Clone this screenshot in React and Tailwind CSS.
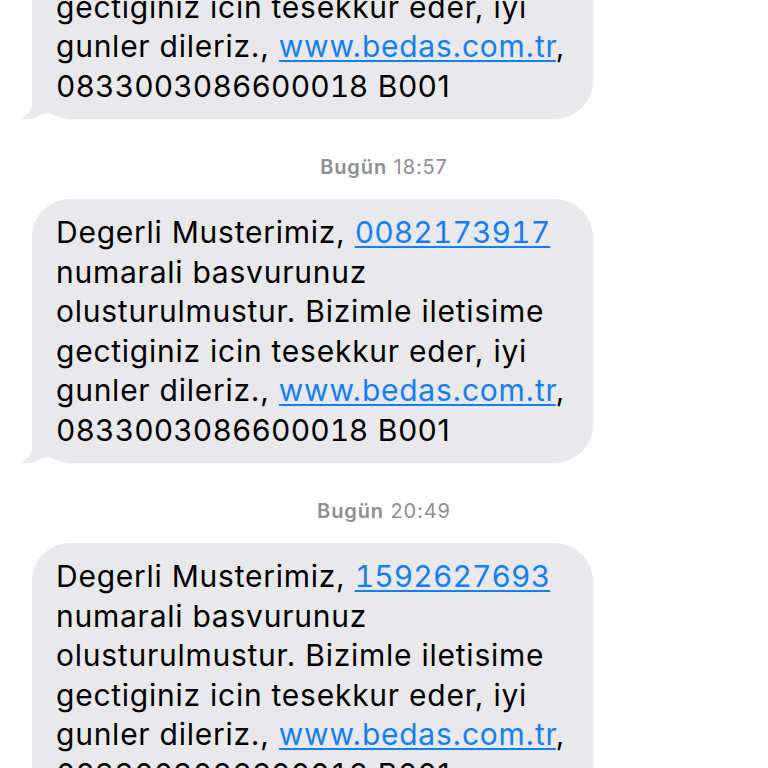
const messages = [
  { id: 'a', ref: '1081139275', time: null },
  { id: 'b', ref: '0082173917', time: '18:57' },
  { id: 'c', ref: '1592627693', time: '20:49' },
]

// iMessage style tail, bottom-left of the bubble
const Tail = () => (
  <svg
    className="absolute left-[-12px] bottom-0"
    width="32"
    height="40"
    viewBox="0 0 32 40"
    fill="#e9e9eb"
  >
    <path d="M12 0 H31 V34 C26 34 22 35 19 37 C14 40 6 41 0 40 C7 37 12 32 12 24 Z" />
  </svg>
)

const link = 'text-[#147ef5] underline decoration-[1.5px] underline-offset-[3px]'
const num = 'tabular-nums tracking-[0.1px]'

const Bubble = ({ ref_ }) => (
  <div className="relative ml-[32px] w-[561px] rounded-[38px] bg-[#e9e9eb] pl-[24px] pr-[12px] pt-[14px] pb-[13px] text-[30px] leading-[39.5px] tracking-[0.75px] text-black">
    <Tail />
    <div className="relative whitespace-nowrap">
      Degerli Musterimiz, <span className={`${link} ${num}`}>{ref_}</span>
      <br />
      numarali basvurunuz
      <br />
      olusturulmustur. Bizimle iletisime
      <br />
      gectiginiz icin tesekkur eder, iyi
      <br />
      gunler dileriz., <span className={link}>www.bedas.com.tr</span>,
      <br />
      <span className={num}>083300308660001</span>8 B001
    </div>
  </div>
)

const Stamp = ({ time }) => (
  <div className="mt-[36px] mb-[20px] text-center text-[20px] leading-[24px] tracking-[0.9px] text-[#8e8e93]">
    <span className="font-semibold">Bugün</span> {time}
  </div>
)

export default function App() {
  return (
    <div
      className="h-[768px] w-[768px] overflow-hidden bg-white"
      style={{ fontFamily: 'Inter, "Liberation Sans", sans-serif' }}
    >
      <div className="-mt-[145px] flex flex-col">
        {messages.map((m) => (
          <div key={m.id}>
            {m.time && <Stamp time={m.time} />}
            <Bubble ref_={m.ref} />
          </div>
        ))}
      </div>
    </div>
  )
}
